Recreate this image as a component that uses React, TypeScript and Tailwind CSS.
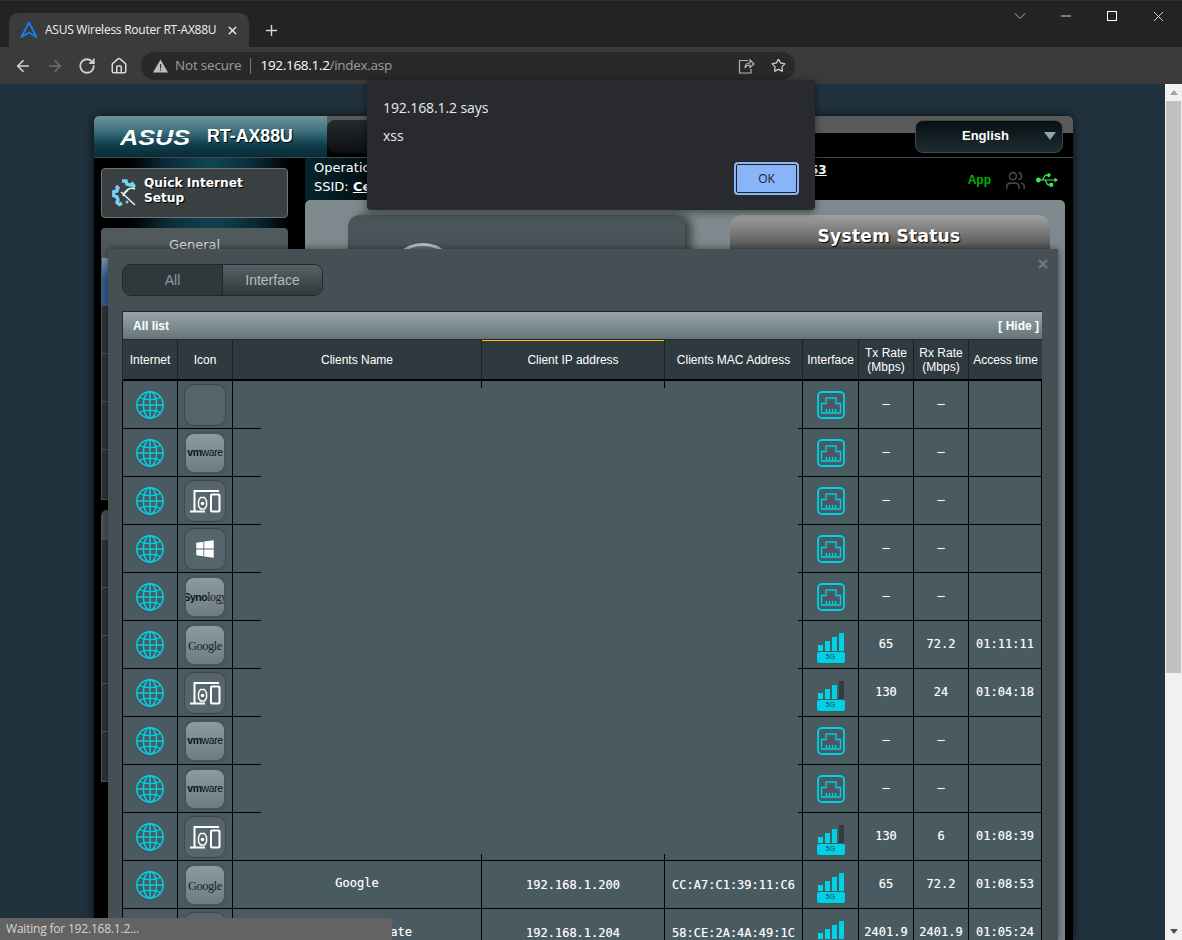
import React from "react";
import { ArrowLeft, ArrowRight, RotateCw, House, Star, ChevronDown, Minus, X, Plus, Users } from "lucide-react";
import { FaUsb, FaWindows } from "react-icons/fa";

type Kind = "empty" | "vmware" | "devices" | "windows" | "synology" | "google";
type Row = { icon: Kind; net: "eth" | 3 | 4; name?: string; ip?: string; mac?: string; tx: string; rx: string; time: string };

const rows: Row[] = [
  { icon: "empty", net: "eth", tx: "–", rx: "–", time: "" },
  { icon: "vmware", net: "eth", tx: "–", rx: "–", time: "" },
  { icon: "devices", net: "eth", tx: "–", rx: "–", time: "" },
  { icon: "windows", net: "eth", tx: "–", rx: "–", time: "" },
  { icon: "synology", net: "eth", tx: "–", rx: "–", time: "" },
  { icon: "google", net: 4, tx: "65", rx: "72.2", time: "01:11:11" },
  { icon: "devices", net: 3, tx: "130", rx: "24", time: "01:04:18" },
  { icon: "vmware", net: "eth", tx: "–", rx: "–", time: "" },
  { icon: "vmware", net: "eth", tx: "–", rx: "–", time: "" },
  { icon: "devices", net: 3, tx: "130", rx: "6", time: "01:08:39" },
  { icon: "google", net: 4, name: "Google", ip: "192.168.1.200", mac: "CC:A7:C1:39:11:C6", tx: "65", rx: "72.2", time: "01:08:53" },
  { icon: "empty", net: 4, name: "ate", ip: "192.168.1.204", mac: "58:CE:2A:4A:49:1C", tx: "2401.9", rx: "2401.9", time: "01:05:24" },
];

const cols = "grid grid-cols-[55px_55px_249px_183px_138px_56px_55px_55px_73px]";

function Globe() {
  return (
    <svg width="30" height="30" viewBox="0 0 30 30" fill="none" stroke="#00d2e6" strokeWidth="1.4">
      <circle cx="15" cy="15" r="13.2" />
      <ellipse cx="15" cy="15" rx="6.6" ry="13.2" />
      <path d="M15 2V28M2 15H28M4.5 7.5C10 10.5 20 10.5 25.5 7.5M4.5 22.5C10 19.5 20 19.5 25.5 22.5" />
    </svg>
  );
}

function Eth() {
  return (
    <svg width="28" height="28" viewBox="0 0 28 28" fill="none" stroke="#00d2e6">
      <rect x="1" y="1" width="26" height="26" rx="4" strokeWidth="1.8" />
      <path d="M4.500 22V12.500H9V7H19V12.500H23.500V22ZM9.500 22V18M12.500 22V18M15.500 22V18M18.500 22V18" strokeWidth="1.300" stroke="#00cfe4" />
    </svg>
  );
}

function Wifi({ level }: { level: 3 | 4 }) {
  const bars = [
    "h-[6px] bg-[#00d2e6]",
    "h-[10px] bg-[#00d2e6]",
    "h-[14px] bg-[#00d2e6]",
    level === 4 ? "h-[18px] bg-[#00d2e6]" : "h-[18px] bg-[#2f3b41]",
  ];
  return (
    <div className="mt-[6px] flex w-[28px] flex-col gap-px">
      <div className="flex h-[18px] items-end gap-[2px] pl-[1px]">
        {bars.map((b, i) => (
          <div key={i} className={`w-[5px] ${b}`} />
        ))}
      </div>
      <div className="flex h-[11px] items-center justify-center rounded-[2px] bg-[#00d2e6] font-['Liberation_Sans'] text-[7px] font-bold text-[#1c6b78]">5G</div>
    </div>
  );
}

function DeviceIcon({ kind }: { kind: Kind }) {
  const logo = kind === "vmware" || kind === "synology" || kind === "google";
  return (
    <div
      className={
        logo
          ? "flex h-[42px] w-[42px] items-center justify-center overflow-hidden rounded-[10px] border-2 border-[#4a5356] bg-[linear-gradient(#8a9ba1,#6d7d82)]"
          : "flex h-[42px] w-[42px] items-center justify-center rounded-[10px] border border-[#3e474b] bg-[#55656b]"
      }
    >
      {kind === "vmware" && (
        <span className="font-['Liberation_Sans'] text-[10.5px] tracking-[-0.4px] text-[#111]">
          <b>vm</b>ware
        </span>
      )}
      {kind === "synology" && (
        <span className="whitespace-nowrap font-['Liberation_Serif'] text-[12px] tracking-[-0.5px] text-[#222]">
          <b className="font-['Liberation_Sans'] text-[10.5px] text-[#111]">Syno</b>logy
        </span>
      )}
      {kind === "google" && <span className="mt-[3px] font-['Liberation_Serif'] text-[12.5px] tracking-[-0.5px] text-[#222]">Google</span>}
      {kind === "windows" && <FaWindows className="h-[20px] w-[20px] text-white" />}
      {kind === "devices" && (
        <svg width="40" height="40" viewBox="0 0 40 40" fill="none" stroke="#fff" strokeWidth="2">
          <path d="M9.500 30V10H34M5 30.500H20" />
          <rect x="26" y="13.500" width="8.500" height="17" rx="1" />
          <path d="M15.500 16.500H19.500L21.500 20V25L19.500 28H15.500L13.500 25V20Z" strokeWidth="1.500" />
          <circle cx="17.500" cy="22.500" r="1.800" fill="#fff" stroke="none" />
        </svg>
      )}
    </div>
  );
}

function TableRow({ r }: { r: Row }) {
  const cell = "flex items-center justify-center border-r border-b border-black h-[48px]";
  const mono = "font-['DejaVu_Sans_Mono'] text-[12px] text-white [text-shadow:0_0_1px_rgba(255,255,255,0.45)]";
  return (
    <div className={cols}>
      <div className={cell}><Globe /></div>
      <div className={cell}><DeviceIcon kind={r.icon} /></div>
      <div className={`${cell} ${mono} ${r.name === "ate" ? "!justify-end pr-[69px] pb-px" : "pb-[3px]"}`}>{r.name}</div>
      <div className={`${cell} ${mono}`}>{r.ip}</div>
      <div className={`${cell} ${mono}`}>{r.mac}</div>
      <div className={cell}>{r.net === "eth" ? <Eth /> : <Wifi level={r.net} />}</div>
      <div className={`${cell} ${mono} pb-px`}>{r.tx}</div>
      <div className={`${cell} ${mono} pb-px`}>{r.rx}</div>
      <div className={`${cell} ${mono} pb-px`}>{r.time}</div>
    </div>
  );
}

function Head({ children, active, last }: { children: React.ReactNode; active?: boolean; last?: boolean }) {
  return (
    <div className={`flex h-[39px] items-center justify-center text-center leading-[14px] ${last ? "" : "border-r border-[#1b2226]"} ${active ? "shadow-[inset_0_1px_0_#ffc000]" : ""}`}>
      {children}
    </div>
  );
}

function ClientModal() {
  return (
    <div className="absolute bottom-0 left-[108px] top-[165px] w-[950px] bg-[#454f54] pl-[14px] pt-[15px] font-['Liberation_Sans'] shadow-[0_0_8px_rgba(0,0,0,0.5)]">
      <X className="absolute right-[8px] top-[8px] h-[14px] w-[14px] text-[#6f7c81]" strokeWidth={3.5} />
      <div className="flex h-[32px] w-[201px] overflow-hidden rounded-[9px] border border-[#20282b] text-[14px]">
        <div className="flex w-[99px] items-center justify-center bg-[#2f393c] text-[#8b9ba1]">All</div>
        <div className="flex flex-1 items-center justify-center border-l border-[#20282b] bg-[linear-gradient(#566165,#2f3a3d)] text-[#b3bcbf]">Interface</div>
      </div>
      <div className="mt-[15px] w-[920px] border-l border-t border-[#20282b]">
        <div className="flex h-[28px] items-center justify-between border-b border-[#20282b] bg-[linear-gradient(#98a6ab,#66747a)] pl-[10px] pr-[3px] text-[12px] font-bold text-white">
          <span>All list</span>
          <span>[ Hide ]</span>
        </div>
        <div className={`${cols} border-b-2 border-black bg-[#2f3a40] text-[12px] text-white`}>
          <Head>Internet</Head>
          <Head>Icon</Head>
          <Head>Clients Name</Head>
          <Head active>Client IP address</Head>
          <Head>Clients MAC Address</Head>
          <Head>Interface</Head>
          <Head>Tx Rate<br />(Mbps)</Head>
          <Head>Rx Rate<br />(Mbps)</Head>
          <Head last>Access time</Head>
        </div>
        <div className="relative -ml-px border-l border-black bg-[#495a60]">
          {rows.map((r, i) => (
            <TableRow key={i} r={r} />
          ))}
          <div className="absolute left-[138px] top-[7px] h-[466px] w-[537px] bg-[#495a60]" />
        </div>
      </div>
    </div>
  );
}

function RouterPage() {
  return (
    <div className="flex h-full w-[979px] flex-col overflow-hidden rounded-t-[5px] bg-black shadow-[0_0_12px_rgba(0,0,0,0.7)]">
      <div className="flex h-[42px] border-b border-[#3c4a50]">
        <div className="flex w-[233px] items-center bg-[linear-gradient(#6d939d_0%,#42727f_35%,#0f3e4c_70%,#0b2b37_100%)] pl-[26px]">
          <svg width="72" height="26" viewBox="0 0 72 26">
            <text x="0" y="21" textLength="70" lengthAdjust="spacingAndGlyphs" fontFamily="Liberation Sans" fontWeight="700" fontStyle="italic" fontSize="22" fill="#fff">ASUS</text>
            <rect x="20" y="13" width="50" height="1" fill="#24596a" />
          </svg>
          <span className="ml-[15px] font-['Liberation_Sans'] text-[17.8px] font-bold text-white [text-shadow:1px_1px_0_#000]">RT-AX88U</span>
        </div>
        <div className="flex flex-1 items-start bg-[linear-gradient(#5a5a5a_17px,#000_17px)] pt-[4px]">
          <div className="h-[33px] w-[200px] rounded-l-[8px] bg-[linear-gradient(#252b2d,#0c0f10)]" />
          <div className="ml-auto mr-[10px] flex h-[33px] w-[148px] items-center rounded-[8px] border border-[#3f4a4e] bg-[linear-gradient(#081014,#1d2c30)] pb-[2px] pl-[46px] font-['Liberation_Sans'] text-[13px] font-bold text-white">
            English
            <span className="ml-[35px] h-0 w-0 border-x-[6px] border-t-[8px] border-x-transparent border-t-[#8aa3b5]" />
          </div>
        </div>
      </div>
      <div className="flex min-h-0 flex-1">
        <div className="flex w-[211px] flex-col bg-[radial-gradient(ellipse_at_55%_0%,#104654_0%,#0a2a35_28%,#000_48%)] px-[7px] pt-[10px]">
          <div className="flex h-[50px] w-[187px] items-center rounded-[4px] border border-[#6b7478] bg-[#3a3f42] pl-[8px]">
            <svg width="30" height="30" viewBox="0 0 30 30" fill="none">
              <path d="M12 3h4l.8 3 3 1.2 2.5-1.4 1.6 2-1.3 2M6 8l2 2-1.2 3-3 .8v4l3 .8L8 22l-1 2.5 2.5 2 2.5-1.500" stroke="#74d2f6" strokeWidth="3.4" />
              <path d="M11 14l14 13M25 11C20 9 15 12 13 18M18 12l-5 5" stroke="#dff4fc" strokeWidth="1.500" />
              <circle cx="17" cy="24" r="1.500" fill="#74d2f6" />
            </svg>
            <span className="-mt-[5px] ml-[4px] font-['DejaVu_Sans'] text-[12.2px] font-bold leading-[15px] text-white [text-shadow:1px_1px_0_#000]">Quick Internet<br />Setup</span>
          </div>
          <div className="mt-[10px] h-[272px] w-[187px] overflow-hidden rounded-t-[4px] border-x border-b border-[#555] bg-[#2e3536]">
            <div className="flex h-[30px] items-center justify-center bg-[#50595c] pt-[3px] font-['DejaVu_Sans'] text-[13px] text-[#ddd]">General</div>
            <div className="h-[48px] bg-[linear-gradient(#7f9ab8,#2f5e90_45%)]" />
            <div className="h-[48px] border-b border-[#555]" />
            <div className="h-[48px] border-b border-[#555]" />
            <div className="h-[48px] border-b border-[#555]" />
          </div>
          <div className="mt-[10px] h-[272px] w-[187px] overflow-hidden rounded-t-[6px] border-x border-b border-[#555] bg-[#2e3536]">
            <div className="h-[30px] border-b border-[#555] bg-[#4a5254]" />
            <div className="h-[48px] border-b border-[#555]" />
            <div className="h-[48px] border-b border-[#555]" />
            <div className="h-[48px] border-b border-[#555]" />
            <div className="h-[48px] border-b border-[#555]" />
          </div>
        </div>
        <div className="flex flex-1 flex-col">
          <div className="flex h-[42px] bg-[linear-gradient(90deg,#07252f,#000_14%)] pl-[9px] pr-[15px]">
            <div className="w-[120px] whitespace-nowrap font-['DejaVu_Sans'] text-[13px] leading-[19px] text-white">
              <div>Operation Mode:</div>
              <div>SSID: <b className="underline">Ce</b></div>
            </div>
            <div className="flex-1 pl-[376px] pt-[3px] font-['DejaVu_Sans'] text-[12px] font-bold text-white underline">53</div>
            <div className="flex items-center pt-[2px]">
              <span className="font-['Liberation_Sans'] text-[12px] font-bold text-[#00b400]">App</span>
              <Users className="ml-[14px] h-[21px] w-[21px] text-[#474747]" strokeWidth={1.800} />
              <FaUsb className="ml-[10px] h-[20px] w-[22px] text-[#35e85a]" />
            </div>
          </div>
          <div className="flex min-h-0 w-[760px] flex-1 gap-[45px] rounded-t-[5px] bg-[#7e8a8e] pl-[43px] pt-[15px]">
            <div className="flex h-[400px] w-[337px] justify-start rounded-t-[12px] bg-[#4a555a] pl-[40px] pt-[28px] shadow-[6px_0_10px_rgba(0,0,0,0.55)]">
              <div className="h-[70px] w-[70px] rounded-full border-[3px] border-[#bfc7cc] bg-[#5f7488]" />
            </div>
            <div className="h-[400px] w-[320px] rounded-t-[12px] bg-[linear-gradient(#a0a0a0,#4f4f4f_36px)] pr-[2px] pt-[9px] text-center font-['DejaVu_Sans'] text-[17px] font-bold tracking-[0.3px] text-white [text-shadow:1px_1px_1px_#000]">
              System Status
            </div>
          </div>
        </div>
      </div>
    </div>
  );
}

function BrowserChrome() {
  return (
    <>
      <div className="flex h-[47px] items-end justify-between border-t border-[#2f2f2f] bg-[#232323] pl-[9px] font-['Open_Sans']">
        <div className="flex items-center">
          <div className="flex h-[34px] w-[240px] items-center rounded-t-[9px] bg-[#3b3b3b] pl-[11px] pr-[10px]">
            <svg width="18" height="18" viewBox="0 0 18 18" fill="none" stroke="#1a7ef0" strokeWidth="1.800" strokeLinejoin="round">
              <path d="M9 1.500L16.500 16L9 11.500L1.500 16Z" />
            </svg>
            <span className="ml-[7px] w-[172px] overflow-hidden whitespace-nowrap text-[12px] tracking-[-0.25px] text-[#f1f1f1]">ASUS Wireless Router RT-AX88U</span>
            <X className="ml-[9px] h-[13px] w-[13px] text-[#e8e8e8]" strokeWidth={2.500} />
          </div>
          <Plus className="ml-[14px] h-[17px] w-[17px] text-[#d5d5d5]" strokeWidth={2} />
        </div>
        <div className="flex h-[30px] self-start text-white">
          <div className="flex w-[44px] items-center justify-center"><ChevronDown className="h-[20px] w-[20px] text-[#cfcfcf]" strokeWidth={1} /></div>
          <div className="flex w-[47px] items-center justify-center"><Minus className="h-[16px] w-[16px]" strokeWidth={1.200} /></div>
          <div className="flex w-[46px] items-center justify-center"><div className="h-[10px] w-[10px] border border-white" /></div>
          <div className="flex w-[47px] items-center justify-center"><X className="h-[17px] w-[17px]" strokeWidth={1.100} /></div>
        </div>
      </div>
      <div className="flex h-[37px] items-center gap-[14px] bg-[#3b3b3b] pl-[14px] font-['Open_Sans']">
        <ArrowLeft className="h-[18px] w-[18px] text-[#d8d8d8]" strokeWidth={2.200} />
        <ArrowRight className="h-[18px] w-[18px] text-[#6f6f6f]" strokeWidth={2.200} />
        <RotateCw className="h-[18px] w-[18px] text-[#d0d0d0]" strokeWidth={2.400} />
        <House className="h-[18px] w-[18px] text-[#d8d8d8]" strokeWidth={2} />
        <div className="-ml-[1px] flex h-[28px] w-[654px] items-center rounded-full bg-[#292929] pl-[12px] pr-[9px] text-[14px]">
          <svg width="15" height="14" viewBox="0 0 15 14" className="mr-[7px]"><path d="M7.500 0.500L15 13.500H0Z" fill="#bdbdbd" /><path d="M7 5h1.200v4.500H7zM7 10.400h1.200v1.300H7z" fill="#333" /></svg>
          <span className="text-[13.5px] tracking-[-0.2px] text-[#9a9ea1]">Not secure</span>
          <span className="mx-[9px] h-[16px] w-px bg-[#777]" />
          <span className="text-[13.5px] tracking-[-0.3px] text-white">192.168.1.2<span className="text-[#9a9ea1]">/index.asp</span></span>
          <svg width="18" height="18" viewBox="0 0 18 18" fill="none" stroke="#b5b5b5" strokeWidth="1.200" className="ml-auto mr-[16px]">
            <path d="M11 3.500H2.500V16H14V12M8 11C8 7.500 10 6 13 6V3L17 7L13 10.500V8C11 8 9 9 8 11Z" />
          </svg>
          <Star className="h-[15px] w-[15px] text-[#cfcfcf]" strokeWidth={2} />
        </div>
      </div>
    </>
  );
}

function Scrollbar() {
  return (
    <div className="flex w-[17px] flex-col items-center bg-[#f1f1f1]">
      <span className="mt-[6px] h-0 w-0 border-x-[4px] border-b-[5px] border-x-transparent border-b-[#a3a3a3]" />
      <div className="mt-[6px] h-[572px] w-[15px] bg-[#c1c1c1]" />
      <span className="mb-[6px] mt-auto h-0 w-0 border-x-[4px] border-t-[5px] border-x-transparent border-t-[#505050]" />
    </div>
  );
}

export default function App() {
  return (
    <div className="relative flex h-[940px] w-[1182px] flex-col overflow-hidden bg-[#21323f]">
      <BrowserChrome />
      <div className="flex min-h-0 flex-1">
        <div className="relative min-w-0 flex-1 bg-[#21323f] pl-[94px] pt-[32px]">
          <RouterPage />
          <ClientModal />
        </div>
        <Scrollbar />
      </div>
      <div className="absolute left-[367px] top-[80px] flex h-[130px] w-[448px] flex-col rounded-b-[4px] bg-[#292a2d] px-[16px] pt-[18px] font-['Open_Sans'] text-[#e8eaed] shadow-[0_2px_8px_rgba(0,0,0,0.5)]">
        <div className="text-[14px] leading-[20px] tracking-[-0.1px]">192.168.1.2 says</div>
        <div className="mt-[9px] text-[14px] leading-[18px]">xss</div>
        <div className="absolute bottom-[15px] right-[16px] flex h-[33px] w-[65px] items-center justify-center rounded-[4px] border-[2px] border-[#8ab4f8] bg-[#8ab4f8] text-[12px] text-[#202124] outline outline-1 -outline-offset-[3px] outline-[#202124]">OK</div>
      </div>
      <div className="absolute bottom-0 left-0 flex h-[22px] w-[392px] items-center rounded-tr-[4px] bg-[#636363] pl-[6px] font-['Open_Sans'] text-[12px] tracking-[-0.2px] text-[#d5d5d5]">Waiting for 192.168.1.2...</div>
    </div>
  );
}
